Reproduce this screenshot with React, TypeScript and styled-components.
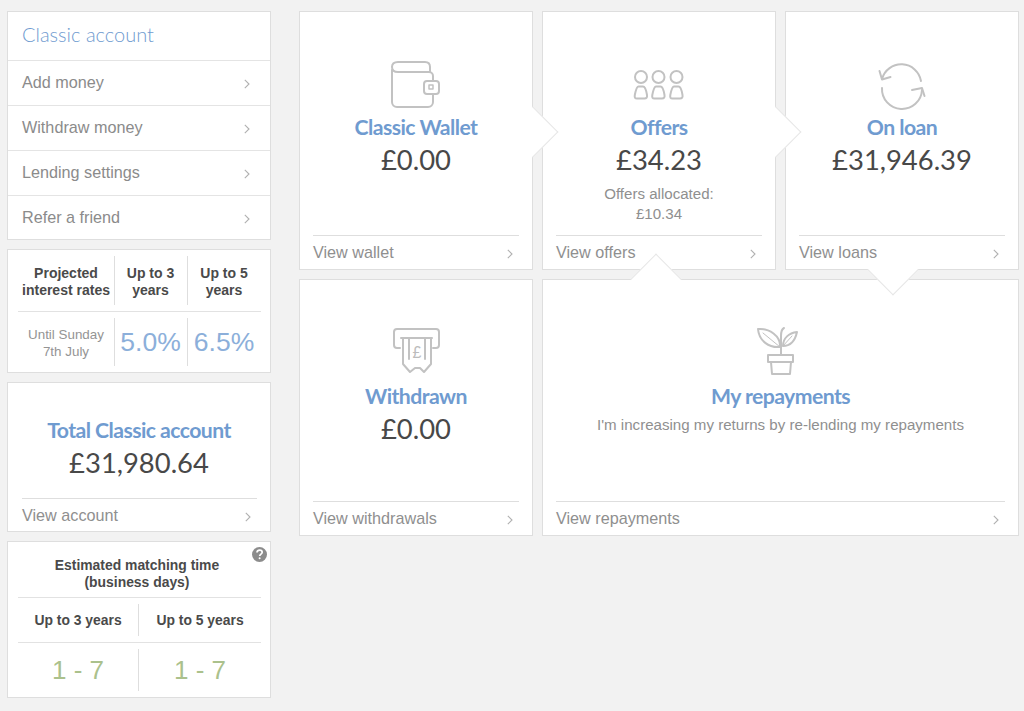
import React from "react";
import styled, { createGlobalStyle } from "styled-components";

const Global = createGlobalStyle`
  html, body { margin: 0; padding: 0; background: #f2f2f2; }
  body { font-family: "Liberation Sans", Arial, sans-serif; }
`;

const Page = styled.div`
  width: 1024px;
  height: 711px;
  box-sizing: border-box;
  padding: 11px 5px 0 7px;
  display: grid;
  grid-template-columns: 264px 720px;
  column-gap: 28px;
  align-items: start;
  overflow: hidden;
`;

const Sidebar = styled.aside`
  display: flex;
  flex-direction: column;
  gap: 9px;
`;

const Panel = styled.section<{ $height?: number }>`
  position: relative;
  box-sizing: border-box;
  background: #fff;
  border: 1px solid #dedede;
  ${(p) => (p.$height ? `height: ${p.$height}px;` : "")}
  display: flex;
  flex-direction: column;
`;

const MenuTitle = styled.h2`
  margin: 0;
  height: 49px;
  box-sizing: border-box;
  padding: 0 0 5px 14px;
  display: flex;
  align-items: center;
  font: 300 20px "Lato", sans-serif;
  color: #6f9bd0;
  border-bottom: 1px solid #e4e4e4;
`;

const MenuRow = styled.a`
  height: 45px;
  box-sizing: border-box;
  padding: 0 20px 2px 14px;
  display: flex;
  align-items: center;
  justify-content: space-between;
  font-size: 16.2px;
  color: #8b8b8b;
  border-bottom: 1px solid #e4e4e4;
  &:last-child { border-bottom: 0; height: 43px; padding-bottom: 0; }
`;

const ChevronSvg = styled.svg`
  width: 6px;
  height: 10px;
  flex: none;
  margin-top: 3px;
  fill: none;
  stroke: #b0b0b0;
  stroke-width: 1.1;
`;

const Chevron = () => (
  <ChevronSvg viewBox="0 0 6 10">
    <path d="M0.8 0.8 L5 5 L0.8 9.2" />
  </ChevronSvg>
);

const RatesGrid = styled.div`
  display: grid;
  grid-template-columns: 96px 73px 74px;
  padding: 0 10px;
`;

const RateCell = styled.div<{ $divider?: boolean; $h: number }>`
  position: relative;
  height: ${(p) => p.$h}px;
  display: flex;
  align-items: center;
  justify-content: center;
  text-align: center;
  ${(p) =>
    p.$divider
      ? `&::before { content: ""; position: absolute; left: 0; top: 6px; bottom: 6px; width: 1px; background: #dedede; }`
      : ""}
`;

const RateHead = styled.span`
  padding-top: 3px;
  font-size: 14px;
  line-height: 17px;
  font-weight: 700;
  color: #4a4a4a;
`;

const RateNote = styled.span`
  padding-top: 2px;
  font-size: 13.4px;
  line-height: 17px;
  color: #949494;
`;

const RateValue = styled.span`
  font-size: 26.5px;
  color: #8cafda;
`;

const Rule = styled.hr`
  margin: 0 9px 0 10px;
  border: 0;
  height: 1px;
  background: #e2e2e2;
  flex: none;
`;

const CardBody = styled.div<{ $top: number }>`
  flex: 1;
  display: flex;
  flex-direction: column;
  align-items: center;
  padding-top: ${(p) => p.$top}px;
`;

const IconSlot = styled.div<{ $h: number }>`
  height: ${(p) => p.$h}px;
  width: 100%;
  display: flex;
  justify-content: center;
  align-items: flex-start;
`;

const Icon = styled.svg<{ $drop?: number }>`
  margin-top: ${(p) => p.$drop ?? 0}px;
  fill: none;
  stroke: #c2c2c2;
  stroke-width: 2;
  stroke-linecap: round;
  stroke-linejoin: round;
  overflow: visible;
`;

const Title = styled.h3`
  margin: 0;
  font: 700 21.2px/32px "Lato", sans-serif;
  letter-spacing: -0.55px;
  color: #6f9bd0;
`;

const Amount = styled.div`
  margin-top: 1px;
  font: 400 27.4px/32px "Lato", sans-serif;
  color: #484848;
`;

const Note = styled.div<{ $gap: number }>`
  margin-top: ${(p) => p.$gap}px;
  font-size: 15.1px;
  line-height: 20px;
  color: #8f8f8f;
  text-align: center;
`;

const Footer = styled.a<{ $h?: number; $left?: number }>`
  margin: 0 13px 0 ${(p) => p.$left ?? 13}px;
  height: ${(p) => p.$h ?? 34}px;
  flex: none;
  box-sizing: border-box;
  border-top: 1px solid #dedede;
  display: flex;
  align-items: center;
  justify-content: space-between;
  padding-right: 6px;
  font-size: 16.2px;
  color: #8f8f8f;
`;

const MatchHead = styled.div`
  height: 55px;
  box-sizing: border-box;
  display: flex;
  align-items: center;
  justify-content: center;
  padding: 8px 4px 0 0;
  text-align: center;
  font-size: 13.9px;
  line-height: 17px;
  font-weight: 700;
  color: #4a4a4a;
`;

const Help = styled.svg`
  position: absolute;
  right: 3px;
  top: 5px;
  width: 15px;
  height: 15px;
`;

const MatchGrid = styled.div`
  display: grid;
  grid-template-columns: 120px 124px;
  padding-left: 10px;
`;

const MatchCell = styled.div<{ $divider?: boolean; $h: number }>`
  position: relative;
  height: ${(p) => p.$h}px;
  display: flex;
  align-items: center;
  justify-content: center;
  ${(p) =>
    p.$divider
      ? `&::before { content: ""; position: absolute; left: 0; top: 6px; bottom: 6px; width: 1px; background: #dedede; }`
      : ""}
`;

const MatchLabel = styled.span`
  font-size: 13.9px;
  font-weight: 700;
  color: #4a4a4a;
`;

const MatchValue = styled.span`
  font-size: 26px;
  color: #abc18c;
`;

const Board = styled.main`
  position: relative;
  display: grid;
  grid-template-columns: 234px 234px 234px;
  grid-template-rows: 259px 257px;
  column-gap: 9px;
  row-gap: 9px;
`;

const WideCell = styled.div`
  grid-column: span 2;
  display: flex;
  min-width: 0;
  & > * { flex: 1; }
`;

const Pointer = styled.span<{ $x: number; $y: number; $dir: "right" | "up" | "down" }>`
  position: absolute;
  z-index: 2;
  left: ${(p) => p.$x}px;
  top: ${(p) => p.$y}px;
  width: 36px;
  height: 36px;
  background: #fff;
  transform: rotate(45deg);
  border-style: solid;
  border-color: #e6e6e6;
  box-sizing: border-box;
  border-width: ${(p) =>
    p.$dir === "right" ? "1px 1px 0 0" : p.$dir === "up" ? "1px 0 0 1px" : "0 1px 1px 0"};
`;

const WalletIcon = () => (
  <Icon width="50" height="48" viewBox="0 0 50 48" $drop={1}>
    <path d="M1 9 V41 A5 5 0 0 0 6 46 H37 A5 5 0 0 0 42 41 V33" />
    <path d="M42 20 V15 A4 4 0 0 0 38 11 H7 C3 11 1 9 1 6 C1 3 3 1 7 1 H34 C37 1 39 3 39 6 V11" />
    <rect x="33" y="20" width="15" height="13" rx="3" />
    <rect x="38" y="24" width="4" height="4" strokeWidth="1.5" />
  </Icon>
);

const PersonGroup = () => (
  <g>
    <circle cx="7" cy="7" r="6" />
    <path d="M4.5 16.5 H9 C11 16.5 12.5 22 13 25 C13.4 27.5 12.5 28.5 10.5 28.5 H3 C1 28.5 0.4 27.5 0.8 25 C1.4 22 2.5 16.5 4.5 16.5 Z" />
  </g>
);

const OffersIcon = () => (
  <Icon width="50" height="32" viewBox="0 0 50 32" $drop={10}>
    <PersonGroup />
    <g transform="translate(17.5 0)"><PersonGroup /></g>
    <g transform="translate(35.5 0)"><PersonGroup /></g>
  </Icon>
);

const LoanIcon = () => (
  <Icon width="46" height="44" viewBox="0 0 46 44" strokeWidth={1.6} $drop={3}>
    <path d="M3 16 A20 20 0 0 1 42 18" />
    <path d="M0.5 8 L3 16.5 L11.5 14" />
    <path d="M3 25 A20 20 0 0 0 43 27" />
    <path d="M33 27 L43 25 L45.5 33" />
  </Icon>
);

const WithdrawIcon = () => (
  <Icon width="47" height="48" viewBox="0 0 47 48" strokeWidth={1.7}>
    <path d="M7 20 H4 A3 3 0 0 1 1 17 V4 A3 3 0 0 1 4 1 H43 A3 3 0 0 1 46 4 V17 A3 3 0 0 1 43 20 H40" />
    <path d="M8 10 H39" />
    <path d="M10 10 V36 L17 44 L22 40 H27 L31 44 L38 36 V10" />
    <path d="M16 10 V31 M32 10 V31" />
    <text
      x="24"
      y="30"
      textAnchor="middle"
      fontSize="16"
      fontFamily="Liberation Sans, sans-serif"
      fill="#bcbcbc"
      stroke="none"
    >
      £
    </text>
  </Icon>
);

const PlantIcon = () => (
  <Icon width="47" height="47" viewBox="0 0 47 47" strokeWidth={1.6}>
    <path d="M24 27 V8 C24 4 25 1 27 0" />
    <path d="M1 1 C12 0 24 8 23 19 C12 20 2 13 1 1 Z" />
    <path d="M6 5 L23 19" strokeWidth={1} />
    <path d="M40 4 C38 13 33 18 26 18 C26 10 32 5 40 4 Z" />
    <path d="M35 8 L26 18" strokeWidth={1} />
    <rect x="11" y="27" width="25" height="7" />
    <path d="M14 34 L15 46 H33 L34 34" />
  </Icon>
);

const Stat = ({
  icon,
  title,
  amount,
  link,
  slot = 51,
  children,
}: {
  icon: React.ReactNode;
  title: string;
  amount?: string;
  link: string;
  slot?: number;
  children?: React.ReactNode;
}) => (
  <Panel>
    <CardBody $top={48}>
      <IconSlot $h={slot}>{icon}</IconSlot>
      <Title>{title}</Title>
      {amount && <Amount>{amount}</Amount>}
      {children}
    </CardBody>
    <Footer>
      {link}
      <Chevron />
    </Footer>
  </Panel>
);

export default function App() {
  return (
    <Page>
      <Global />
      <Sidebar>
        <Panel $height={229}>
          <MenuTitle>Classic account</MenuTitle>
          {["Add money", "Withdraw money", "Lending settings", "Refer a friend"].map((t) => (
            <MenuRow key={t}>
              {t}
              <Chevron />
            </MenuRow>
          ))}
        </Panel>

        <Panel $height={124}>
          <RatesGrid>
            <RateCell $h={61}><RateHead>Projected<br />interest rates</RateHead></RateCell>
            <RateCell $h={61} $divider><RateHead>Up to 3<br />years</RateHead></RateCell>
            <RateCell $h={61} $divider><RateHead>Up to 5<br />years</RateHead></RateCell>
          </RatesGrid>
          <Rule />
          <RatesGrid>
            <RateCell $h={60}><RateNote>Until Sunday<br />7th July</RateNote></RateCell>
            <RateCell $h={60} $divider><RateValue>5.0%</RateValue></RateCell>
            <RateCell $h={60} $divider><RateValue>6.5%</RateValue></RateCell>
          </RatesGrid>
        </Panel>

        <Panel $height={150}>
          <CardBody $top={31}>
            <Title>Total Classic account</Title>
            <Amount>£31,980.64</Amount>
          </CardBody>
          <Footer $h={33} $left={14}>
            View account
            <Chevron />
          </Footer>
        </Panel>

        <Panel $height={157}>
          <Help viewBox="0 0 15 15">
            <circle cx="7.5" cy="7.5" r="7.5" fill="#8c8c8c" />
            <path d="M5 5.6 C5 3.9 6.2 3.1 7.6 3.1 C9.1 3.1 10.2 4 10.2 5.3 C10.2 7.1 7.7 7.1 7.7 9" fill="none" stroke="#fff" strokeWidth="1.7" />
            <circle cx="7.6" cy="11.3" r="1" fill="#fff" />
          </Help>
          <MatchHead>Estimated matching time<br />(business days)</MatchHead>
          <Rule />
          <MatchGrid>
            <MatchCell $h={44}><MatchLabel>Up to 3 years</MatchLabel></MatchCell>
            <MatchCell $h={44} $divider><MatchLabel>Up to 5 years</MatchLabel></MatchCell>
          </MatchGrid>
          <Rule />
          <MatchGrid>
            <MatchCell $h={54}><MatchValue>1 - 7</MatchValue></MatchCell>
            <MatchCell $h={54} $divider><MatchValue>1 - 7</MatchValue></MatchCell>
          </MatchGrid>
        </Panel>
      </Sidebar>

      <Board>
        <Stat icon={<WalletIcon />} title="Classic Wallet" amount="£0.00" link="View wallet" />
        <Stat icon={<OffersIcon />} title="Offers" amount="£34.23" link="View offers">
          <Note $gap={8}>Offers allocated:<br />£10.34</Note>
        </Stat>
        <Stat icon={<LoanIcon />} title="On loan" amount="£31,946.39" link="View loans" />
        <Stat icon={<WithdrawIcon />} slot={52} title="Withdrawn" amount="£0.00" link="View withdrawals" />
        <WideCell>
          <Stat icon={<PlantIcon />} slot={52} title="My repayments" link="View repayments">
            <Note $gap={3}>I'm increasing my returns by re-lending my repayments</Note>
          </Stat>
        </WideCell>
        <Pointer $dir="right" $x={216} $y={103} />
        <Pointer $dir="right" $x={459} $y={103} />
        <Pointer $dir="up" $x={339} $y={250} />
        <Pointer $dir="down" $x={576} $y={241} />
      </Board>
    </Page>
  );
}
